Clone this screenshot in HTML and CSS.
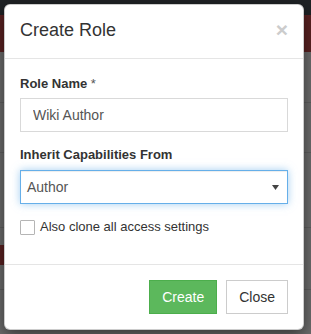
FILE: index.html
```html
<!DOCTYPE html>
<html>
<head>
<meta charset="utf-8">
<link rel="stylesheet" href="styles.css">
</head>
<body>
<div class="page">
  <div class="navbar"></div>
  <div class="banner"></div>
  <div class="row r1"></div>
  <div class="row r2"></div>
  <div class="row r3"></div>
  <div class="banner2"></div>
  <div class="row r4"></div>
</div>
<div class="modal">
  <div class="modal-header">
    <h4 class="modal-title">Create Role</h4>
    <span class="close">×</span>
  </div>
  <div class="modal-body">
    <div class="form-group">
      <label class="label">Role Name <span class="req">*</span></label>
      <input class="form-control" type="text" value="Wiki Author">
    </div>
    <div class="form-group">
      <label class="label">Inherit Capabilities From</label>
      <div class="form-control select">
        <span>Author</span>
        <svg class="caret" width="7" height="5" viewBox="0 0 7 5"><polygon points="0,0 7,0 3.5,5" fill="#444"/></svg>
      </div>
    </div>
    <div class="checkbox">
      <span class="box"></span>
      <span>Also clone all access settings</span>
    </div>
  </div>
  <div class="modal-footer">
    <button class="btn btn-success">Create</button>
    <button class="btn btn-default">Close</button>
  </div>
</div>
</body>
</html>
```

FILE: styles.css
```css
* { box-sizing: border-box; }
html, body { margin: 0; padding: 0; }
body {
  width: 311px;
  height: 334px;
  overflow: hidden;
  background: #6c6c6c;
  font-family: "Liberation Sans", Arial, sans-serif;
  font-size: 14px;
  line-height: 20px;
  color: #333;
  position: relative;
}
.page { display: flex; flex-direction: column; }
.navbar { height: 15px; background: #1f2225; }
.banner { height: 37px; background: #5a2222; }
.row { border-bottom: 1px solid #5f5f5f; }
.r1 { height: 51px; }
.r2 { height: 50px; }
.r3 { height: 75px; }
.banner2 { height: 20px; background: #5a2222; width: 10px; margin-top: 17px; }
.r4 { height: 25px; }

.modal {
  position: absolute;
  left: 4px;
  top: 4px;
  width: 300px;
  background: #fff;
  border: 1px solid rgba(0,0,0,.2);
  border-radius: 6px;
  box-shadow: 0 5px 15px rgba(0,0,0,.5);
}
.modal-header {
  display: flex;
  justify-content: space-between;
  align-items: flex-start;
  padding: 15px 15px 17px 15px;
  border-bottom: 1px solid #e5e5e5;
}
.modal-title {
  margin: 0;
  font-size: 18px;
  font-weight: normal;
  line-height: 21px;
  color: #333;
}
.close {
  font-size: 21px;
  font-weight: bold;
  line-height: 21px;
  color: #cccccc;
  margin-top: -1px;
}
.modal-body {
  padding: 15px 15px 15px 15px;
}
.form-group { margin-bottom: 13px; }
.label {
  display: block;
  font-size: 13px;
  font-weight: bold;
  margin-bottom: 4px;
}
.form-group + .form-group .label { margin-bottom: 5px; }
.req { font-weight: normal; color: #555; }
.form-control {
  display: block;
  width: 100%;
  height: 34px;
  padding: 6px 12px;
  font-family: "Liberation Sans", Arial, sans-serif;
  font-size: 14px;
  line-height: 20px;
  color: #555;
  background: #fff;
  border: 1px solid #d9d9d9;
  border-radius: 0;
  outline: none;
  margin: 0;
}
.select {
  display: flex;
  align-items: center;
  justify-content: space-between;
  padding: 6px 8px 6px 6px;
  border-color: #66afe9;
  box-shadow: inset 0 1px 1px rgba(0,0,0,.075), 0 0 8px rgba(102,175,233,.6);
}
.caret { margin-top: 1px; }
.checkbox {
  display: flex;
  align-items: center;
  gap: 5px;
  margin-top: 13px;
  margin-bottom: 12px;
  font-size: 13px;
  color: #333;
}
.box {
  width: 15px;
  height: 15px;
  border: 1px solid #b5b5b5;
  border-radius: 1px;
  background: #fff;
}
.modal-footer {
  display: flex;
  justify-content: flex-end;
  gap: 9px;
  padding: 15px;
  border-top: 1px solid #e5e5e5;
}
.btn {
  height: 34px;
  padding: 6px 12px;
  font-family: "Liberation Sans", Arial, sans-serif;
  font-size: 14px;
  line-height: 20px;
  border: 1px solid transparent;
  border-radius: 0;
  margin: 0;
}
.btn-success { background: #5cb85c; border-color: #4cae4c; color: #fff; }
.btn-default { background: #fff; border-color: #ccc; color: #333; }
```
